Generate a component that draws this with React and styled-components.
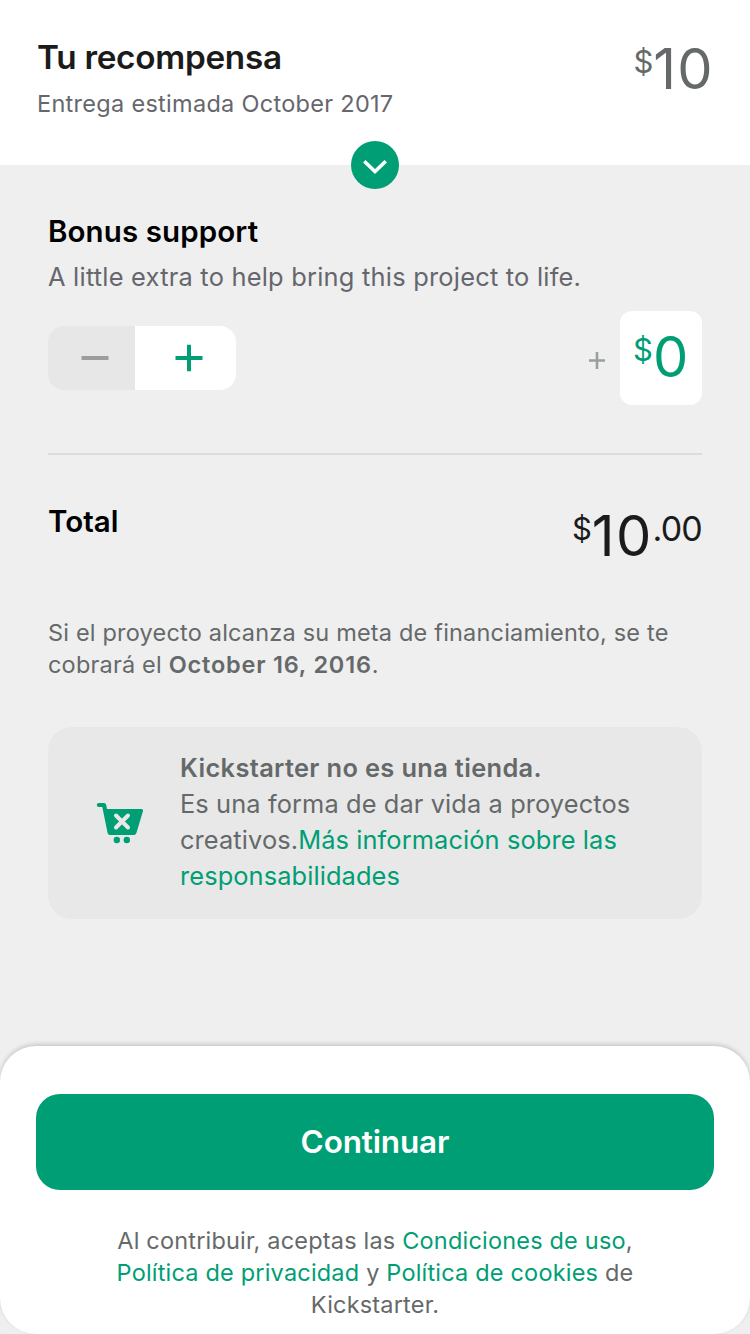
import React from 'react';
import styled, { createGlobalStyle } from 'styled-components';

const Global = createGlobalStyle`
  * { box-sizing: border-box; }
  body { margin: 0; background: #efefef; font-family: Inter, "Liberation Sans", sans-serif; color: #1b1b1b; }
`;
const Screen = styled.main`
  width: 750px; height: 1334px; display: flex; flex-direction: column; overflow: hidden; background: #efefef;
`;
const Header = styled.header`
  position: relative; height: 165px; padding: 35px 36px 0 37px; background: #fff;
  display: flex; justify-content: space-between;
`;
const Toggle = styled.button`
  position: absolute; left: 351px; top: 141px; width: 48px; height: 48px; padding: 0;
  border: 0; border-radius: 50%; background: #009e74;
  svg { display: block; }
`;
const Line = styled.div`
  font-size: ${p => p.$size}px; line-height: ${p => p.$lh}px; font-weight: ${p => p.$weight || 400};
  color: ${p => p.$color || '#656969'}; letter-spacing: ${p => p.$ls || 0}px; white-space: nowrap;
  margin-top: ${p => p.$top || 0}px;
`;
const Strong = styled.strong`font-weight: 600; letter-spacing: ${p => p.$ls}px;`;
const Price = styled.div`
  display: flex; align-items: flex-start; color: ${p => p.$color}; font-size: 56px; line-height: 69px;
  white-space: nowrap;
`;
const Currency = styled.span`font-size: 31px; line-height: 54px;`;
const Whole = styled.span`letter-spacing: 1.3px;`;
const Cents = styled.span`font-size: 34px; line-height: 54px; letter-spacing: -0.8px;`;
const Body = styled.section`flex: 1; padding: 47px 48px 0;`;
const Controls = styled.div`display: flex; align-items: center; justify-content: space-between; height: 94px; margin-top: 17px;`;
const Stepper = styled.div`display: flex; width: 188px; height: 64px; border-radius: 16px; overflow: hidden;`;
const Step = styled.button`
  border: 0; padding: 0; width: ${p => p.$w}px; background: ${p => p.$bg};
  svg { display: block; }
`;
const Amount = styled.div`display: flex; align-items: center; gap: 14px;`;
const AmountBox = styled.div`
  width: 82px; height: 94px; border-radius: 12px; background: #fff; padding: 12px 0 0 13px;
`;
const Divider = styled.div`height: 2px; background: #dcdcdc; margin-top: 48px;`;
const Total = styled.div`display: flex; justify-content: space-between; height: 68px; margin-top: 47px;`;
const Notice = styled.div`
  height: 192px; margin-top: 46px; border-radius: 24px; background: #e8e8e8;
  display: flex; align-items: center; padding: 0 0 2px 48px; gap: 36px;
  svg { flex: none; }
`;
const Green = styled.span`color: #009e74;`;
const Footer = styled.footer`
  height: 288px; background: #fff; border-radius: 36px; padding: 48px 36px 0;
  box-shadow: 0 -2px 4px rgba(0,0,0,.16); text-align: center;
`;
const Continue = styled.button`
  width: 100%; height: 96px; border: 0; border-radius: 24px; background: #009e74;
  color: #fff; font: 600 31.5px/96px Inter, sans-serif; letter-spacing: -0.15px; padding: 0;
`;

export default function App() {
  return (
    <>
      <Global />
      <Screen>
        <Header>
          <div>
            <Line $size={33.3} $lh={44} $weight={600} $color="#1b1b1b" $ls={-0.28}>Tu recompensa</Line>
            <Line $size={23.5} $lh={32} $top={9} $ls={0.29} $color="#66666d">Entrega estimada October 2017</Line>
          </div>
          <Price $color="#656969"><Currency>$</Currency><Whole>10</Whole></Price>
          <Toggle aria-label="Expandir">
            <svg width="48" height="48" fill="none"><path d="M13.300 20.300L24 30.500l10.700-10.200" stroke="#fff" strokeWidth="3.600" /></svg>
          </Toggle>
        </Header>
        <Body>
          <Line $size={29.5} $lh={38} $weight={600} $color="#000" $ls={0.1}>Bonus support</Line>
          <Line $size={25.4} $lh={34} $top={10} $ls={0.23} $color="#66666d">A little extra to help bring this project to life.</Line>
          <Controls>
            <Stepper>
              <Step $w={87} $bg="#e7e7e7" aria-label="Menos">
                <svg width="87" height="64"><path d="M33.500 32h27" stroke="#9b9e9e" strokeWidth="4" /></svg>
              </Step>
              <Step $w={101} $bg="#fff" aria-label="Más">
                <svg width="101" height="64"><path d="M40.500 32h27M54 18.700v26.500" stroke="#009e74" strokeWidth="4" /></svg>
              </Step>
            </Stepper>
            <Amount>
              <svg width="18" height="22"><path d="M1 13.500h16M9 5v17" stroke="#9b9e9e" strokeWidth="2.600" /></svg>
              <AmountBox><Price $color="#009e74"><Currency>$</Currency><Whole>0</Whole></Price></AmountBox>
            </Amount>
          </Controls>
          <Divider />
          <Total>
            <Line $size={29.5} $lh={38} $weight={600} $color="#000">Total</Line>
            <Price $color="#1b1b1b"><Currency>$</Currency><Whole>10</Whole><Cents>.00</Cents></Price>
          </Total>
          <Line $size={23.5} $lh={32} $top={47} $ls={0.19}>
            Si el proyecto alcanza su meta de financiamiento, se te<br />cobrará el <Strong $ls={0.8}>October 16, 2016</Strong>.
          </Line>
          <Notice>
            <svg width="48" height="48" viewBox="0 0 48 48" fill="#009e74">
              <path d="M2.800 5H8q1.700 0 2.100 1.600L11 11H45.500q2 0 1.500 2l-6.600 22q-.6 2-2.600 2H14q-2 0-2.400-2L6.300 9H2.800a2 2 0 0 1 0-4z" />
              <circle cx="20.800" cy="42" r="3.200" /><circle cx="30.800" cy="42" r="3.200" />
              <path d="M20 17.500l12 12M32 17.500l-12 12" stroke="#e8e8e8" strokeWidth="4" strokeLinecap="round" />
            </svg>
            <Line $size={25.4} $lh={36} $ls={0.1}>
              <Strong $ls={0.35}>Kickstarter no es una tienda.</Strong><br />Es una forma de dar vida a proyectos<br />creativos.<Green>Más información sobre las<br />responsabilidades</Green>
            </Line>
          </Notice>
        </Body>
        <Footer>
          <Continue>Continuar</Continue>
          <Line $size={23.5} $lh={32} $top={35} $ls={0.19}>
            Al contribuir, aceptas las <Green>Condiciones de uso</Green>,<br /><Green>Política de privacidad</Green> y <Green>Política de cookies</Green> de<br />Kickstarter.
          </Line>
        </Footer>
      </Screen>
    </>
  );
}
